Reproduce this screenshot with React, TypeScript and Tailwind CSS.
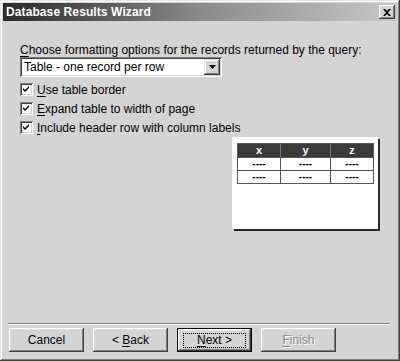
import React from "react";

const font = { fontFamily: '"Liberation Sans", Arial, sans-serif' };

function Check() {
  return (
    <div className="w-[13px] h-[13px] bg-white shadow-[inset_1px_1px_#808080,inset_-1px_-1px_#ffffff,inset_2px_2px_#404040,inset_-2px_-2px_#d4d4d4] flex items-center justify-center">
      <svg width="7" height="7" viewBox="0 0 7 7">
        <path d="M0 2 L2 4 L6 0 L6 2 L2 6 L0 4 Z" fill="#000" />
      </svg>
    </div>
  );
}

function Btn({ children, def, disabled }: { children: React.ReactNode; def?: boolean; disabled?: boolean }) {
  const inner = (
    <div
      className={`w-full h-full flex items-center justify-center bg-[#d4d4d4] shadow-[inset_-1px_-1px_#404040,inset_1px_1px_#ffffff,inset_-2px_-2px_#808080,inset_2px_2px_#e0e0e0] text-[12px] ${
        disabled ? "text-[#8a8a8a] [text-shadow:1px_1px_#ffffff]" : "text-black"
      }`}
    >
      {def ? (
        <div className="w-[63px] h-[15px] border border-dotted border-black flex items-center justify-center">{children}</div>
      ) : (
        <span>{children}</span>
      )}
    </div>
  );
  return def ? (
    <div className="w-[75px] h-[24px] border border-black">{inner}</div>
  ) : (
    <div className="w-[75px] h-[24px]">{inner}</div>
  );
}

export default function App() {
  return (
    <div
      style={font}
      className="w-[400px] h-[361px] bg-[#d4d4d4] p-[3px] flex flex-col shadow-[inset_-1px_-1px_#404040,inset_1px_1px_#e4e4e4,inset_-2px_-2px_#808080,inset_2px_2px_#ffffff] text-black"
    >
      <div className="h-[18px] flex items-center justify-between pl-[3px] pr-[2px] bg-[linear-gradient(to_right,#2a2a2a,#8a8a8a_50%,#c8c8c8)]">
        <span className="text-white font-bold text-[12px] tracking-[0.1px]">Database Results Wizard</span>
        <div className="w-[16px] h-[14px] bg-[#d4d4d4] shadow-[inset_-1px_-1px_#404040,inset_1px_1px_#ffffff,inset_-2px_-2px_#808080] flex items-center justify-center">
          <svg width="8" height="7" viewBox="0 0 8 7">
            <path d="M0 0h2l2 2l2-2h2l-3 3.5l3 3.5h-2l-2-2l-2 2h-2l3-3.5z" fill="#000" />
          </svg>
        </div>
      </div>

      <div className="flex flex-col pl-[17px] pt-[22px] text-[12px]">
        <div className="h-[14px] leading-[14px]">
          <span className="underline underline-offset-2">C</span>hoose formatting options for the records returned by the query:
        </div>
        <div className="w-[202px] h-[20px] bg-white shadow-[inset_1px_1px_#808080,inset_-1px_-1px_#ffffff,inset_2px_2px_#404040,inset_-2px_-2px_#d4d4d4] flex items-center justify-between pl-[4px] pr-[2px]">
          <span>Table - one record per row</span>
          <div className="w-[16px] h-[16px] bg-[#d4d4d4] shadow-[inset_-1px_-1px_#404040,inset_1px_1px_#e0e0e0,inset_-2px_-2px_#808080,inset_2px_2px_#ffffff] flex items-center justify-center">
            <svg width="7" height="4" viewBox="0 0 7 4">
              <path d="M0 0h7l-3.5 4z" fill="#000" />
            </svg>
          </div>
        </div>
        <div className="flex flex-col mt-[3px]">
          {[
            ["U", "se table border"],
            ["E", "xpand table to width of page"],
            ["I", "nclude header row with column labels"],
          ].map(([u, rest]) => (
            <div key={u} className="h-[19px] flex items-center gap-[4px]">
              <Check />
              <span>
                <span className="underline underline-offset-2">{u}</span>
                {rest}
              </span>
            </div>
          ))}
        </div>
        <div className="ml-[212px] mt-[0px] w-[146px] h-[92px] bg-white shadow-[2px_2px_#2a2a2a] pt-[6px] pl-[5px]">
          <div className="w-[137px] border border-[#555] text-[11px]">
            <div className="flex h-[13px] bg-[#3a3a3a] text-white font-bold">
              <div className="w-[43px] flex items-center justify-center border-r border-[#777]">x</div>
              <div className="w-[50px] flex items-center justify-center border-r border-[#777]">y</div>
              <div className="flex-1 flex items-center justify-center">z</div>
            </div>
            {[0, 1].map((i) => (
              <div key={i} className="flex h-[13px] border-t border-[#555] text-[10px] font-bold leading-none">
                <div className="w-[43px] flex items-center justify-center border-r border-[#555]">----</div>
                <div className="w-[50px] flex items-center justify-center border-r border-[#555]">----</div>
                <div className="flex-1 flex items-center justify-center">----</div>
              </div>
            ))}
          </div>
        </div>
      </div>

      <div className="flex-1" />
      <div className="mx-[5px] w-[382px] h-[2px] border-t border-[#808080] border-b border-b-white" />
      <div className="flex gap-[9px] pl-[6px] mt-[3px] mb-[6px]">
        <Btn>Cancel</Btn>
        <Btn>
          &lt; <span className="underline underline-offset-2">B</span>ack
        </Btn>
        <Btn def>
          <span>
            <span className="underline underline-offset-2">N</span>ext &gt;
          </span>
        </Btn>
        <Btn disabled>
          <span className="underline underline-offset-2">F</span>inish
        </Btn>
      </div>
    </div>
  );
}
